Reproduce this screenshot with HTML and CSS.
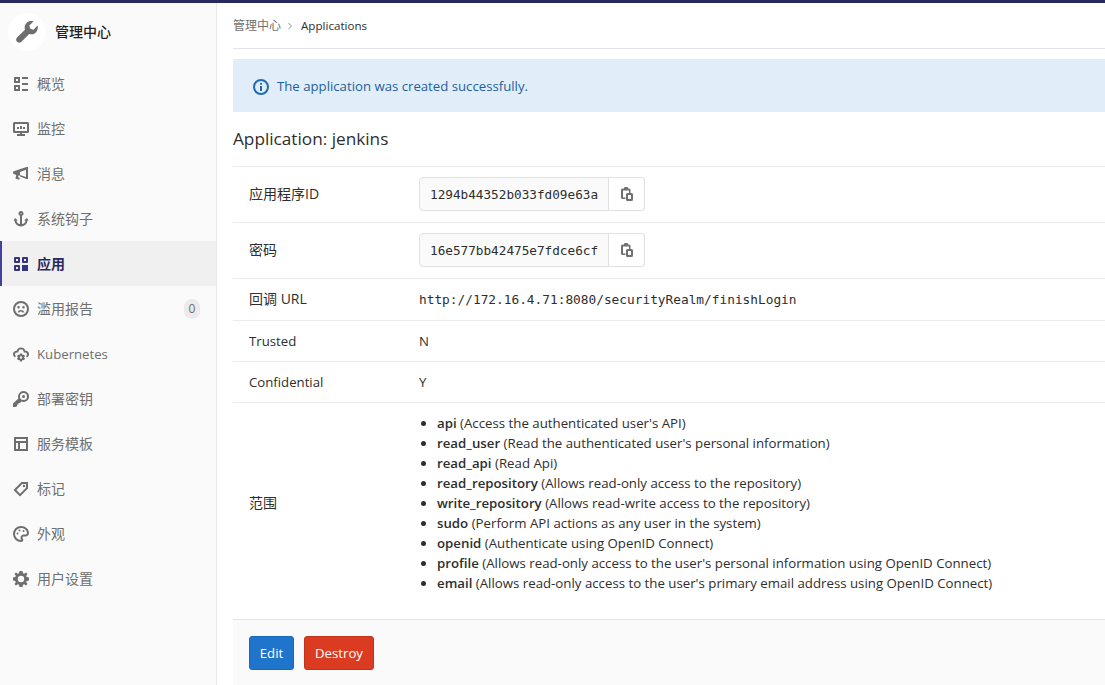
FILE: index.html
```html
<!DOCTYPE html>
<html lang="zh">
<head>
<meta charset="utf-8">
<title>Application: jenkins</title>
<link rel="stylesheet" href="styles.css">
</head>
<body>
<div class="topbar"></div>
<div class="layout">
  <aside class="sidebar">
    <div class="context">
      <span class="avatar">
        <svg class="wrench" viewBox="0 0 16 16"><path d="M15.700 3.300l-3 3-2.300-.6-.7-2.400 3-3C11 -.3 9 .1 7.700 1.400 6.400 2.700 6 4.600 6.500 6.300L.9 11.900c-1.100 1.100-1.100 2.200-.1 3.200 1 1 2.100 1 3.200-.1l5.600-5.600c1.700.6 3.600.2 4.900-1.100 1.300-1.300 1.700-3.300 1.200-5z"/></svg>
      </span>
      <span class="context-title">管理中心</span>
    </div>
    <nav class="nav">
      <a class="nav-item"><svg class="ic" viewBox="0 0 16 16"><path fill-rule="evenodd" d="M1 1h6v6H1zm2 2v2h2V3zM1 9h6v6H1zm2 2v2h2v-2zM9 1h6v2H9zm0 6h6v2H9zm0 6h6v2H9z"/></svg><span>概览</span></a>
      <a class="nav-item"><svg class="ic" viewBox="0 0 16 16"><path fill-rule="evenodd" d="M1.500 1h13A1.500 1.500 0 0 1 16 2.500v8a1.500 1.500 0 0 1-1.500 1.500H9v1h3v2H4v-2h3v-1H1.500A1.500 1.500 0 0 1 0 10.500v-8A1.500 1.500 0 0 1 1.500 1zM2 3v7h12V3zm2 3h2v2H4zm3-1h2v3H7zm3 1h2v2h-2z"/></svg><span>监控</span></a>
      <a class="nav-item"><svg class="ic" viewBox="0 0 16 16"><path fill-rule="evenodd" d="M15 1v12h-1.500L7 10.500V9.800L5.700 9.300l-.7 1.900 1.900.7-.7 1.900-3.800-1.400L3.300 9 1.500 8.300A1.500 1.500 0 0 1 0 7V6.500A1.500 1.500 0 0 1 1.500 5L13.500 1zM13 3.700L7 5.900v3l6 2.200z"/></svg><span>消息</span></a>
      <a class="nav-item"><svg class="ic" viewBox="0 0 16 16"><path fill-rule="evenodd" d="M8 0a2.500 2.500 0 0 1 1 4.800V13a4 4 0 0 0 3.500-3.500H11L14 7l1.500 2.500h-1A6.500 6.500 0 0 1 8 15.500 6.500 6.500 0 0 1 1.500 9.500h-1L2 7l3 2.500H3.500A4 4 0 0 0 7 13V4.800A2.500 2.500 0 0 1 8 0zm0 2a.6.600 0 1 0 0 1.200A.6.600 0 0 0 8 2z"/></svg><span>系统钩子</span></a>
      <a class="nav-item active"><svg class="ic" viewBox="0 0 16 16"><path fill-rule="evenodd" d="M2 1h4a1 1 0 0 1 1 1v4a1 1 0 0 1-1 1H2a1 1 0 0 1-1-1V2a1 1 0 0 1 1-1zm1 2v2h2V3zm7-2h4a1 1 0 0 1 1 1v4a1 1 0 0 1-1 1h-4a1 1 0 0 1-1-1V2a1 1 0 0 1 1-1zm1 2v2h2V3zM2 9h4a1 1 0 0 1 1 1v4a1 1 0 0 1-1 1H2a1 1 0 0 1-1-1v-4a1 1 0 0 1 1-1zm1 2v2h2v-2zm6-2h6v6H9z"/></svg><span>应用</span></a>
      <a class="nav-item"><svg class="ic" viewBox="0 0 16 16"><path fill-rule="evenodd" d="M8 0a8 8 0 1 1 0 16A8 8 0 0 1 8 0zm0 2a6 6 0 1 0 0 12A6 6 0 0 0 8 2zM5.500 5a1.250 1.250 0 1 1 0 2.500 1.250 1.250 0 0 1 0-2.500zm5 0a1.250 1.250 0 1 1 0 2.500 1.250 1.250 0 0 1 0-2.500zM8 9c1.500 0 2.700.700 3.300 2l-1.400.7C9.500 10.900 8.800 10.500 8 10.500s-1.500.400-1.900 1.200l-1.400-.7C5.300 9.700 6.500 9 8 9z"/></svg><span>滥用报告</span><span class="badge">0</span></a>
      <a class="nav-item"><svg class="ic" viewBox="0 0 16 16"><path fill-rule="evenodd" d="M8 1.500a4.500 4.500 0 0 1 4.300 3.200A3.600 3.600 0 0 1 16 8.300c0 1.500-.9 2.800-2.200 3.300l-.6-1.800c.5-.3.800-.8.800-1.500 0-1-.8-1.800-1.800-1.800h-1.400l-.2-1A2.700 2.700 0 0 0 8 3.300a2.700 2.700 0 0 0-2.600 2.200l-.2 1H3.800C2.800 6.500 2 7.300 2 8.300c0 .7.300 1.200.8 1.500l-.6 1.800A3.600 3.600 0 0 1 3.700 4.700 4.500 4.500 0 0 1 8 1.500zM7 7.500h2l.2 1 .8.400 1-.4 1 1.700-.8.700v1l.8.700-1 1.700-1-.4-.8.400-.2 1.200H7l-.2-1.200-.8-.4-1 .4-1-1.700.8-.7v-1l-.8-.7 1-1.700 1 .4.800-.4zM8 10.300a1.200 1.200 0 1 0 0 2.400 1.200 1.200 0 0 0 0-2.400z"/></svg><span class="latin">Kubernetes</span></a>
      <a class="nav-item"><svg class="ic" viewBox="0 0 16 16"><path fill-rule="evenodd" d="M10.500 0a5.500 5.500 0 1 1-2 10.600L7 12.100H5.500v1.500H4V15l-1 1H0v-3.500l5.400-5.100A5.500 5.500 0 0 1 10.500 0zm0 2a3.500 3.500 0 1 0 0 7 3.500 3.500 0 0 0 0-7zm0 2a1.500 1.500 0 1 1 0 3 1.500 1.500 0 0 1 0-3z"/></svg><span>部署密钥</span></a>
      <a class="nav-item"><svg class="ic" viewBox="0 0 16 16"><path fill-rule="evenodd" d="M1 1h14v14H1zm2 2v2h10V3zm0 4v6h2V7zm4 0v6h6V7z"/></svg><span>服务模板</span></a>
      <a class="nav-item"><svg class="ic" viewBox="0 0 16 16"><path fill-rule="evenodd" d="M8.500 1h6a.5.500 0 0 1 .5.500v6L7 15.500.5 9zm.8 2L3.300 9 7 12.700l6-6V3zm1.700.8a1.200 1.200 0 1 1 0 2.400 1.200 1.200 0 0 1 0-2.400z"/></svg><span>标记</span></a>
      <a class="nav-item"><svg class="ic" viewBox="0 0 16 16"><path fill-rule="evenodd" d="M8 0c4.400 0 8 3.100 8 7 0 2.200-1.800 3.500-3.500 3.500h-1.700c-.7 0-1.300.6-1.300 1.300 0 .3.100.6.300.8.400.5.500.9.500 1.400 0 1.100-.9 2-2.300 2A8 8 0 0 1 8 0zm0 2a6 6 0 0 0 0 12c.3 0 .3-.3.100-.5-.4-.5-.6-1-.6-1.700 0-1.800 1.500-3.300 3.300-3.300h1.700c.9 0 1.500-.6 1.500-1.500C14 4.300 11.300 2 8 2zM4.500 6.500a1 1 0 1 1 0 2 1 1 0 0 1 0-2zm2-3a1 1 0 1 1 0 2 1 1 0 0 1 0-2zm4 .5a1 1 0 1 1 0 2 1 1 0 0 1 0-2z"/></svg><span>外观</span></a>
      <a class="nav-item"><svg class="ic" viewBox="0 0 16 16"><path fill-rule="evenodd" d="M6.500 0h3l.5 2.300 1.200.5 1.900-1.300 1.400 1.400-1.300 1.900.5 1.200 2.300.5v3l-2.300.5-.5 1.200 1.300 1.900-1.400 1.400-1.900-1.300-1.200.5-.5 2.300h-3L6 13.700l-1.200-.5-1.900 1.300-1.400-1.400 1.300-1.900-.5-1.200L0 9.500v-3L2.300 6l.5-1.200-1.300-1.900 1.400-1.400 1.900 1.300L6 2.300zM8 4.800a3.200 3.200 0 1 0 0 6.400 3.200 3.200 0 0 0 0-6.400z"/></svg><span>用户设置</span></a>
    </nav>
  </aside>
  <main class="content">
    <div class="breadcrumb">
      <a class="crumb-link">管理中心</a>
      <svg class="chevron" viewBox="0 0 8 8"><path d="M2.500 1l3 3-3 3" fill="none" stroke="#8f8f8f" stroke-width="1"/></svg>
      <span class="crumb-current">Applications</span>
    </div>
    <div class="alert">
      <svg class="alert-icon" viewBox="0 0 16 16"><path fill-rule="evenodd" d="M8 0a8 8 0 1 1 0 16A8 8 0 0 1 8 0zm0 2a6 6 0 1 0 0 12A6 6 0 0 0 8 2zM7 7h2v5H7zm1-3.300a1.100 1.100 0 1 1 0 2.200 1.100 1.100 0 0 1 0-2.200z"/></svg>
      <span>The application was created successfully.</span>
    </div>
    <h3 class="title">Application: jenkins</h3>
    <div class="details">
      <div class="row row-input">
        <div class="label label-cjk">应用程序ID</div>
        <div class="input-group">
          <span class="input">1294b44352b033fd09e63a</span>
          <span class="copy"><svg class="copy-ic" viewBox="0 0 12 14"><path fill-rule="evenodd" d="M4 0h2a1 1 0 0 1 1 1v.5h1A1.500 1.500 0 0 1 9.500 3v3H8V3.500H2v7h2.500V12h-3A1.500 1.500 0 0 1 0 10.500V3a1.500 1.500 0 0 1 1.500-1.500H3V1a1 1 0 0 1 1-1zM6.500 6h4A1.500 1.500 0 0 1 12 7.500v5a1.500 1.500 0 0 1-1.500 1.500h-4A1.500 1.500 0 0 1 5 12.500v-5A1.500 1.500 0 0 1 6.500 6zM7 8v4h3V8z"/></svg></span>
        </div>
      </div>
      <div class="row row-input">
        <div class="label label-cjk">密码</div>
        <div class="input-group">
          <span class="input">16e577bb42475e7fdce6cf</span>
          <span class="copy"><svg class="copy-ic" viewBox="0 0 12 14"><path fill-rule="evenodd" d="M4 0h2a1 1 0 0 1 1 1v.5h1A1.500 1.500 0 0 1 9.500 3v3H8V3.500H2v7h2.500V12h-3A1.500 1.500 0 0 1 0 10.500V3a1.500 1.500 0 0 1 1.500-1.500H3V1a1 1 0 0 1 1-1zM6.500 6h4A1.500 1.500 0 0 1 12 7.500v5a1.500 1.500 0 0 1-1.500 1.500h-4A1.500 1.500 0 0 1 5 12.500v-5A1.500 1.500 0 0 1 6.500 6zM7 8v4h3V8z"/></svg></span>
        </div>
      </div>
      <div class="row row-url">
        <div class="label label-cjk label-url">回调 URL</div>
        <code class="code">http://172.16.4.71:8080/securityRealm/finishLogin</code>
      </div>
      <div class="row row-text">
        <div class="label">Trusted</div>
        <div>N</div>
      </div>
      <div class="row row-text">
        <div class="label">Confidential</div>
        <div>Y</div>
      </div>
      <div class="row row-scopes">
        <div class="label label-cjk">范围</div>
        <ul class="scopes">
          <li><strong>api</strong> (Access the authenticated user's API)</li>
          <li><strong>read_user</strong> (Read the authenticated user's personal information)</li>
          <li><strong>read_api</strong> (Read Api)</li>
          <li><strong>read_repository</strong> (Allows read-only access to the repository)</li>
          <li><strong>write_repository</strong> (Allows read-write access to the repository)</li>
          <li><strong>sudo</strong> (Perform API actions as any user in the system)</li>
          <li><strong>openid</strong> (Authenticate using OpenID Connect)</li>
          <li><strong>profile</strong> (Allows read-only access to the user's personal information using OpenID Connect)</li>
          <li><strong>email</strong> (Allows read-only access to the user's primary email address using OpenID Connect)</li>
        </ul>
      </div>
    </div>
    <div class="actions">
      <a class="btn btn-edit">Edit</a>
      <a class="btn btn-destroy">Destroy</a>
    </div>
  </main>
</div>
</body>
</html>
```
FILE: styles.css
```css
* { box-sizing: border-box; }
html, body { height: 100%; }
body {
  margin: 0;
  overflow: hidden;
  background: #fff;
  color: #2e2e2e;
  font-family: "Open Sans", "Noto Sans CJK SC", sans-serif;
  font-size: 13.200px;
  line-height: 20px;
}
.topbar { height: 3px; background: #292961; }
.layout { display: flex; height: 682px; }
.sidebar {
  flex: 0 0 217px;
  background: #fafafa;
  border-right: 1px solid #e9e9e9;
}
.context { display: flex; align-items: center; height: 58px; padding-left: 8px; gap: 9px; }
.avatar {
  display: flex; align-items: center; justify-content: center;
  width: 38px; height: 38px; border-radius: 50%; background: #fff;
}
.wrench { width: 22px; height: 22px; fill: #6e6e6e; }
.context-title { color: #1f1f1f; font-weight: 500; font-size: 14px; }
.nav-item {
  display: flex; align-items: center; height: 45px;
  padding-left: 13px; gap: 8px; color: #6f6f6f; font-size: 14px;
}
.latin { font-size: 13.200px; }
.ic { width: 16px; height: 16px; fill: #6e6e6e; flex: none; }
.active {
  background: #f0f0f0; color: #292961; font-weight: 600;
  box-shadow: inset 2px 0 0 #41419f;
}
.active .ic { fill: #35357f; }
.badge {
  margin-left: auto; margin-right: 16px;
  width: 16px; height: 20px; border-radius: 8px;
  background: #ebebeb; color: #707070;
  font-size: 12px; text-align: center;
}
.content { flex: 1 1 auto; min-width: 0; padding-left: 16px; }
.breadcrumb {
  display: flex; align-items: center; height: 46px;
  border-bottom: 1px solid #e5e5e5; font-size: 12px;
}
.crumb-link { color: #707070; }
.chevron { width: 8px; height: 8px; margin: 0 7px 0 5px; }
.crumb-current { color: #2e2e2e; font-weight: 500; font-size: 11.600px; }
.alert {
  display: flex; align-items: center; height: 53px;
  margin-top: 10px; padding-left: 20px; gap: 8px;
  background: #e1eefa; color: #1f5e9e;
}
.alert-icon { width: 16px; height: 16px; fill: #1f6bb5; flex: none; margin-top: 2px; }
.title {
  margin: 0; height: 54px; display: flex; align-items: center;
  font-size: 17.200px; font-weight: 500; color: #2e2e2e;
}
.details { border-top: 1px solid #ececec; }
.row {
  display: grid; grid-template-columns: 186px 1fr; align-items: center;
  border-bottom: 1px solid #ececec;
}
.row:last-child { border-bottom: 0; }
.label { padding-left: 16px; color: #2e2e2e; }
.label-cjk { font-size: 14px; }
.label-url { margin-bottom: 2px; }
.row-input { height: 56px; padding-bottom: 1px; }
.row-url { height: 42px; }
.row-text { height: 41px; }
.row-scopes { height: 216px; padding-bottom: 16px; }
.input-group { display: flex; height: 34px; width: 226px; }
.input {
  flex: 0 0 190px; padding: 1px 0 0 10px; overflow: hidden; white-space: nowrap;
  font-family: "DejaVu Sans Mono", monospace; font-size: 12.700px; line-height: 32px;
  background: #fafafa; color: #2e2e2e;
  border: 1px solid #e0e0e0; border-radius: 4px 0 0 4px;
}
.copy {
  flex: 1; display: flex; align-items: center; justify-content: center;
  border: 1px solid #e0e0e0; border-left: 0; border-radius: 0 4px 4px 0; background: #fff;
}
.copy-ic { width: 12px; height: 14px; fill: #707070; }
.code { font-family: "DejaVu Sans Mono", monospace; font-size: 12.800px; color: #2e2e2e; }
.scopes { margin: 0; padding-left: 18px; font-size: 13.260px; }
.scopes strong { font-weight: 600; }
.actions {
  display: flex; gap: 10px; align-items: flex-start;
  height: 66px; padding: 16px;
  background: #fafafa; border-top: 1px solid #e5e5e5;
}
.btn {
  display: flex; align-items: center; justify-content: center;
  height: 34px; border-radius: 3px; color: #fff;
}
.btn-edit { width: 45px; background: #1f75cb; border: 1px solid #1b69b6; }
.btn-destroy { width: 70px; background: #db3b21; border: 1px solid #c0341d; }
```
